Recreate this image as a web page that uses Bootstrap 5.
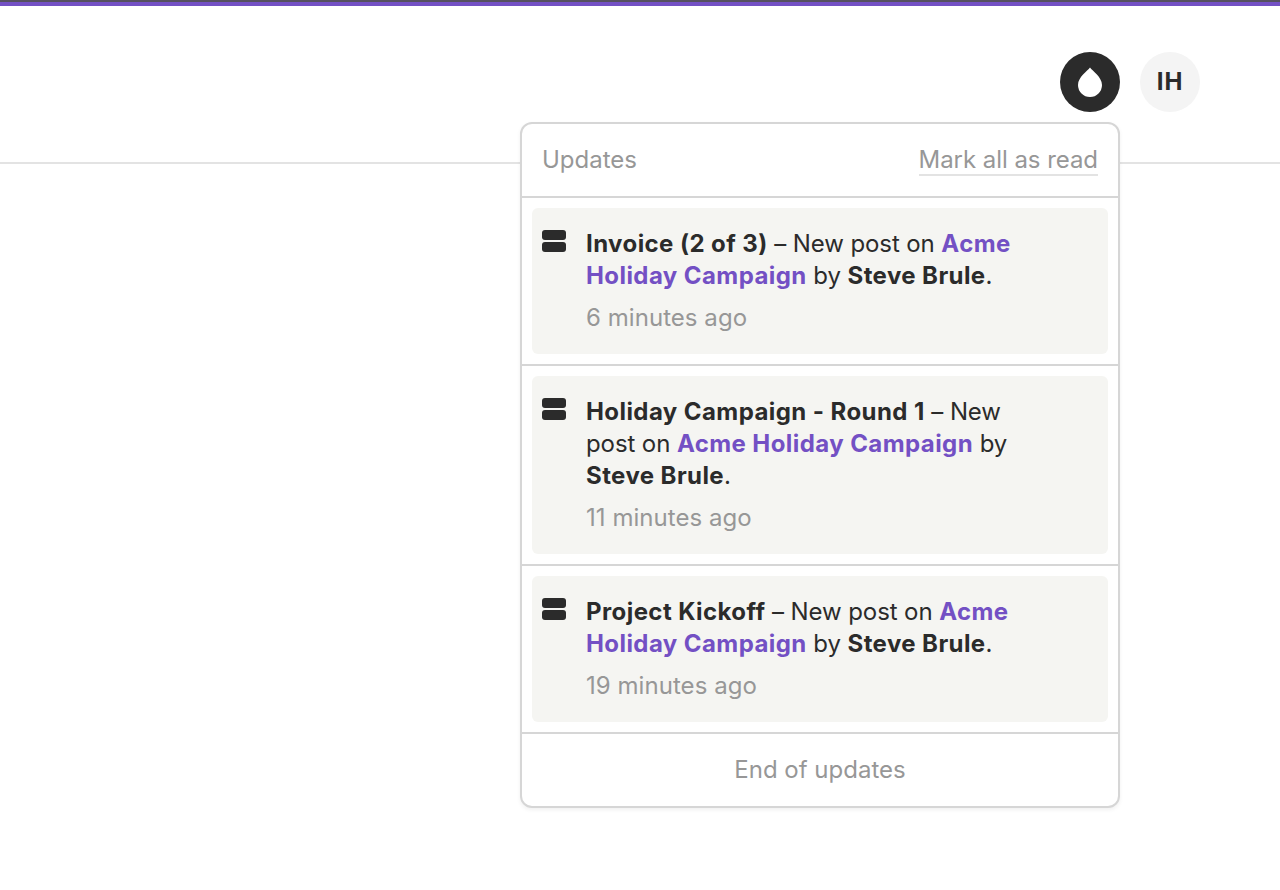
<!DOCTYPE html>
<html lang="en"><head><meta charset="utf-8"><title>Updates</title>
<link href="https://cdn.jsdelivr.net/npm/bootstrap@5.3.0/dist/css/bootstrap.min.css" rel="stylesheet">
<style>
html,body{height:100%}
body{font-family:Inter,"Liberation Sans",sans-serif;color:#2b2b2b;background:#fff;font-size:24px;line-height:32px;overflow:hidden}
.topstrip{height:6px;background:#7350c4;border-top:2px solid #55505f}
.headbar{height:158px;border-bottom:2px solid #e3e3e3;padding:46px 80px 0 0}
.avatar{width:60px;height:60px;flex:none}
.avatar-dark{background:#2b2b2b}
.avatar-light{background:#f4f4f4;font-weight:700;font-size:24px;letter-spacing:1px}
.gap-avatars{gap:20px}
.panel{position:absolute;left:520px;top:122px;width:600px;background:#fff;border:2px solid #d6d6d6;border-radius:12px;box-shadow:0 2px 4px rgba(0,0,0,.06)}
.panel-head{height:74px;padding:0 20px;color:#979797;border-bottom:2px solid #d6d6d6}
.markread{color:#979797;border-bottom:2px solid #e3e3e3;line-height:28px;margin-top:1px;letter-spacing:-.05px}
.update-wrap{padding:10px;border-bottom:2px solid #d6d6d6}
.update{background:#f5f5f2;border-radius:6px;padding:20px 10px 20px 10px;gap:20px}
.update-copy{max-width:440px;letter-spacing:-.1px}
.stack-ico{width:24px;height:22px;flex:none;margin-top:2px}
.upd-title,.upd-by,.upd-link{font-weight:700;letter-spacing:.42px}
.upd-link{color:#7350c4;text-decoration:none}
.upd-time{color:#979797;margin-top:10px;letter-spacing:.05px}
.panel-foot{height:72px;color:#979797}
</style></head>
<body>
<div class="topstrip"></div>
<header class="headbar d-flex justify-content-end align-items-start gap-avatars">
  <div class="avatar avatar-dark rounded-circle d-flex align-items-center justify-content-center">
    <svg width="24" height="30" viewBox="0 0 24 30" aria-hidden="true"><path fill="#fff" d="M12 0.5 C14.5 4 24 10 24 18 A12 12 0 0 1 0 18 C0 10 9.5 4 12 0.5Z"/></svg>
  </div>
  <div class="avatar avatar-light rounded-circle d-flex align-items-center justify-content-center">IH</div>
</header>
<section class="panel">
  <div class="panel-head d-flex justify-content-between align-items-center"><span>Updates</span><a class="markread text-decoration-none" href="#">Mark all as read</a></div>
  <div class="update-wrap"><div class="update d-flex">
    <svg class="stack-ico" viewBox="0 0 24 22" aria-hidden="true"><rect width="24" height="10" rx="3" fill="#2b2b2b"/><rect y="12" width="24" height="10" rx="3" fill="#2b2b2b"/></svg>
    <div class="update-copy"><div><span class="upd-title">Invoice (2 of 3)</span> – New post on <a class="upd-link" href="#">Acme Holiday Campaign</a> by <span class="upd-by">Steve Brule</span>.</div><div class="upd-time">6 minutes ago</div></div>
  </div></div>
  <div class="update-wrap"><div class="update d-flex">
    <svg class="stack-ico" viewBox="0 0 24 22" aria-hidden="true"><rect width="24" height="10" rx="3" fill="#2b2b2b"/><rect y="12" width="24" height="10" rx="3" fill="#2b2b2b"/></svg>
    <div class="update-copy"><div><span class="upd-title">Holiday Campaign - Round 1</span> – New post on <a class="upd-link" href="#">Acme Holiday Campaign</a> by <span class="upd-by">Steve Brule</span>.</div><div class="upd-time">11 minutes ago</div></div>
  </div></div>
  <div class="update-wrap"><div class="update d-flex">
    <svg class="stack-ico" viewBox="0 0 24 22" aria-hidden="true"><rect width="24" height="10" rx="3" fill="#2b2b2b"/><rect y="12" width="24" height="10" rx="3" fill="#2b2b2b"/></svg>
    <div class="update-copy"><div><span class="upd-title">Project Kickoff</span> – New post on <a class="upd-link" href="#">Acme Holiday Campaign</a> by <span class="upd-by">Steve Brule</span>.</div><div class="upd-time">19 minutes ago</div></div>
  </div></div>
  <div class="panel-foot d-flex align-items-center justify-content-center">End of updates</div>
</section>
</body></html>
